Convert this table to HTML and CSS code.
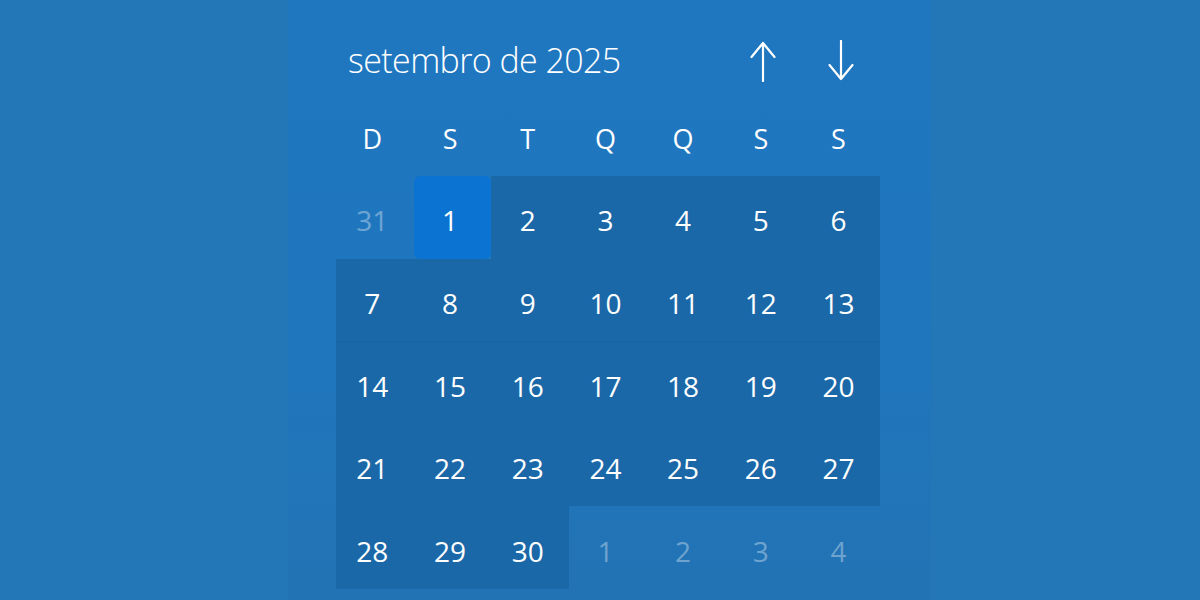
FILE: index.html
```html
<!DOCTYPE html>
<html lang="pt-BR">
<head>
<meta charset="utf-8">
<title>Calendário</title>
<link rel="stylesheet" href="styles.css">
</head>
<body>
<div class="panel">
  <div class="header">
    <div class="title">setembro de 2025</div>
    <button class="nav" aria-label="Mês anterior">
      <svg width="30" height="42" viewBox="0 0 30 42"><path d="M15 3 V41 M3.5 17 L15 3 L26.5 17" fill="none" stroke="#fff" stroke-width="2.2" stroke-linecap="round" stroke-linejoin="round"/></svg>
    </button>
    <button class="nav" aria-label="Próximo mês">
      <svg width="30" height="42" viewBox="0 0 30 42"><path d="M15 1 V39 M3.5 25 L15 39 L26.5 25" fill="none" stroke="#fff" stroke-width="2.2" stroke-linecap="round" stroke-linejoin="round"/></svg>
    </button>
  </div>
  <div class="weekdays">
    <span>D</span><span>S</span><span>T</span><span>Q</span><span>Q</span><span>S</span><span>S</span>
  </div>
  <div class="days">
    <span class="day out">31</span>
    <span class="day sel">1</span>
    <span class="day in">2</span>
    <span class="day in">3</span>
    <span class="day in">4</span>
    <span class="day in">5</span>
    <span class="day in">6</span>
    <span class="day in">7</span>
    <span class="day in">8</span>
    <span class="day in">9</span>
    <span class="day in">10</span>
    <span class="day in">11</span>
    <span class="day in">12</span>
    <span class="day in">13</span>
    <span class="day in line">14</span>
    <span class="day in line">15</span>
    <span class="day in line">16</span>
    <span class="day in line">17</span>
    <span class="day in line">18</span>
    <span class="day in line">19</span>
    <span class="day in line">20</span>
    <span class="day in">21</span>
    <span class="day in">22</span>
    <span class="day in">23</span>
    <span class="day in">24</span>
    <span class="day in">25</span>
    <span class="day in">26</span>
    <span class="day in">27</span>
    <span class="day in">28</span>
    <span class="day in">29</span>
    <span class="day in">30</span>
    <span class="day out">1</span>
    <span class="day out">2</span>
    <span class="day out">3</span>
    <span class="day out">4</span>
  </div>
</div>
</body>
</html>
```
FILE: styles.css
```css
html, body {
  margin: 0;
  padding: 0;
  height: 100%;
}
body {
  background: #2377b7;
  font-family: "Open Sans", "Noto Sans", sans-serif;
  color: #fff;
  overflow: hidden;
}
.panel {
  width: 643px;
  height: 600px;
  margin-left: 288px;
  box-sizing: border-box;
  padding: 21px 0 0 48px;
  background: linear-gradient(180deg, #1f77c0 0%, #1f76bd 55%, #2273b4 100%);
}
.header {
  display: grid;
  grid-template-columns: repeat(7, 77.7px);
  height: 80px;
  align-items: center;
}
.title {
  grid-column: 1 / span 5;
  padding-left: 12px;
  font-size: 34px;
  font-weight: 300;
  letter-spacing: -0.6px;
  line-height: 1;
  padding-bottom: 2px;
}
.nav {
  background: none;
  border: 0;
  padding: 0;
  margin: 0;
  display: flex;
  justify-content: center;
  align-items: center;
  height: 80px;
}
.nav svg { display: block; }
.weekdays {
  display: grid;
  grid-template-columns: repeat(7, 77.7px);
  height: 75px;
  align-items: center;
  font-size: 27px;
  line-height: 1;
}
.weekdays span {
  text-align: center;
  padding-right: 5px;
}
.days {
  display: grid;
  grid-template-columns: repeat(7, 77.7px);
  grid-auto-rows: 82.6px;
}
.day {
  display: flex;
  align-items: center;
  justify-content: center;
  font-size: 28px;
  line-height: 1;
  box-sizing: border-box;
  padding: 6px 5px 0 0;
}
.day.in { background: #1b68a8; }
.day.line { border-top: 1px solid #1862a0; }
.day.sel {
  background: #0b74d2;
  border-radius: 6px;
}
.day.out { color: rgba(255, 255, 255, 0.36); }
```
